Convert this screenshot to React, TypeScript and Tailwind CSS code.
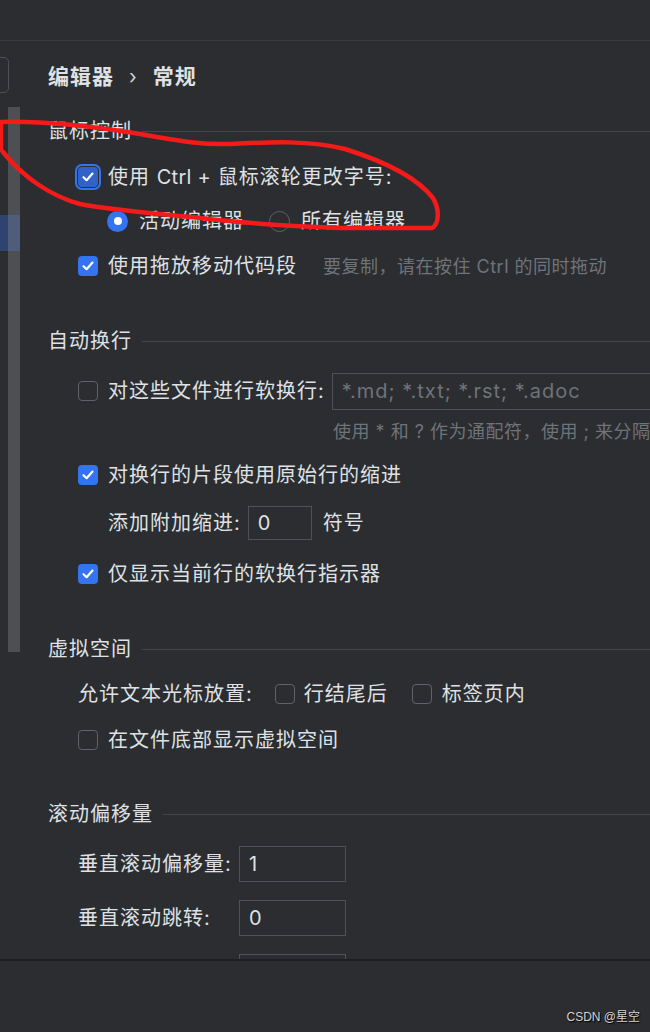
import React from 'react';

const FONT = "font-['Inter','Noto_Sans_CJK_SC',sans-serif]";

const Box = ({ checked = false, focused = false }: { checked?: boolean; focused?: boolean }) => {
    if (!checked) {
        return <div className="w-[20px] h-[20px] shrink-0 rounded-[4px] border border-[#5f6268]" />;
    }
    return (
        <div
            className={`w-[20px] h-[20px] shrink-0 rounded-[4px] flex items-center justify-center ${
                focused ? 'bg-[#3062c8] outline-2 outline-[#3574f0] outline-offset-[1px]' : 'bg-[#3574f0]'
            }`}
        >
            <svg width="14" height="14" viewBox="0 0 14 14" fill="none">
                <path d="M2.5 7.2 L5.6 10.2 L11.5 3.6" stroke="white" strokeWidth="2.2" strokeLinecap="round" strokeLinejoin="round" />
            </svg>
        </div>
    );
};

const Radio = ({ on = false }: { on?: boolean }) =>
    on ? (
        <div className="w-[21px] h-[21px] shrink-0 rounded-full bg-[#3574f0] flex items-center justify-center">
            <div className="w-[8px] h-[8px] rounded-full bg-white" />
        </div>
    ) : (
        <div className="w-[21px] h-[21px] shrink-0 rounded-full border-[1.5px] border-[#5f6268]" />
    );

const Section = ({ title, className = '' }: { title: string; className?: string }) => (
    <div className={`flex items-center h-[30px] ${className}`}>
        <span className="whitespace-nowrap">{title}</span>
        <div className="ml-[10px] flex-1 h-px bg-[#43454a]" />
    </div>
);

const CheckRow = ({ label, checked, focused, className = '', children }: {
    label: React.ReactNode; checked?: boolean; focused?: boolean; className?: string; children?: React.ReactNode;
}) => (
    <div className={`flex items-center h-[44px] ml-[30px] ${className}`}>
        <Box checked={checked} focused={focused} />
        <span className="ml-[10px] whitespace-nowrap">{label}</span>
        {children}
    </div>
);

const Field = ({ value, className = '' }: { value: string; className?: string }) => (
    <div className={`shrink-0 border border-[#4e5157] flex items-center pl-[9px] ${className}`}>
        {value}
    </div>
);

const Sidebar = () => (
    <div className="w-[20px] shrink-0 relative">
        <div className="mt-[16px] -ml-[4px] w-[13px] h-[36px] rounded-[5px] border border-[#4e5157]" />
        <div className="mt-[122px] h-[36px] bg-[#2e436e]" />
        <div className="absolute left-[8px] top-[66px] w-[12px] h-[545px] bg-[#8b8e94]/35" />
    </div>
);

export default function App() {
    return (
        <div className={`w-[650px] h-[1032px] bg-[#2b2d30] flex flex-col relative overflow-hidden text-[#dfe1e5] ${FONT}`}>
            <div className="h-[41px] shrink-0 border-b border-[#393b40]" />

            <div className="flex h-[918px] shrink-0 overflow-hidden">
                <Sidebar />

                <div className="flex-1 min-w-0 pl-[28px] flex flex-col [&>*]:shrink-0 text-[20px] tracking-[1px]">
                    <div className="mt-[14px] h-[44px] flex items-center text-[21px] font-bold">
                        <span>编辑器</span>
                        <span className="mx-[15px] font-normal text-[20px] text-[#cfd1d6]">›</span>
                        <span>常规</span>
                    </div>

                    <Section title="鼠标控制" className="mt-[17px]" />
                    <CheckRow
                        label={<>使用 <span className="tracking-[0.3px]">Ctrl +</span> 鼠标滚轮更改字号:</>}
                        checked
                        focused
                        className="mt-[9px]"
                    />
                    <div className="flex items-center h-[44px] ml-[59px]">
                        <Radio on />
                        <span className="ml-[11px]">活动编辑器</span>
                        <div className="ml-[25px]"><Radio /></div>
                        <span className="ml-[11px]">所有编辑器</span>
                    </div>
                    <div className="flex items-center h-[46px] ml-[30px]">
                        <Box checked />
                        <span className="ml-[10px] whitespace-nowrap">使用拖放移动代码段</span>
                        <span className="ml-[26px] text-[18px] tracking-[0.5px] text-[#6f737a] whitespace-nowrap">要复制，请在按住 Ctrl 的同时拖动</span>
                    </div>

                    <Section title="自动换行" className="mt-[37px]" />
                    <div className="flex items-center h-[38px] ml-[30px] mt-[16px]">
                        <Box />
                        <span className="ml-[10px] whitespace-nowrap">对这些文件进行软换行:</span>
                        <Field value="*.md; *.txt; *.rst; *.adoc" className="ml-[7px] w-[400px] h-[37px] text-[#6f737a]" />
                    </div>
                    <div className="h-[24px] mt-[9px] pl-[285px] flex items-center text-[18px] tracking-[0.5px] text-[#6f737a] whitespace-nowrap">
                        使用 * 和 ? 作为通配符，使用 ; 来分隔
                    </div>
                    <CheckRow label="对换行的片段使用原始行的缩进" checked className="mt-[10px]" />
                    <div className="flex items-center h-[34px] ml-[60px] mt-[9px]">
                        <span className="whitespace-nowrap">添加附加缩进:</span>
                        <Field value="0" className="ml-[7px] w-[64px] h-[34px]" />
                        <span className="ml-[11px]">符号</span>
                    </div>
                    <CheckRow label="仅显示当前行的软换行指示器" checked className="mt-[12px]" />

                    <Section title="虚拟空间" className="mt-[38px]" />
                    <div className="flex items-center h-[44px] ml-[30px] mt-[8px]">
                        <span className="whitespace-nowrap">允许文本光标放置:</span>
                        <div className="ml-[22px]"><Box /></div>
                        <span className="ml-[9px] whitespace-nowrap">行结尾后</span>
                        <div className="ml-[24px]"><Box /></div>
                        <span className="ml-[10px] whitespace-nowrap">标签页内</span>
                    </div>
                    <CheckRow label="在文件底部显示虚拟空间" className="mt-[2px]" />

                    <Section title="滚动偏移量" className="mt-[37px]" />
                    <div className="flex items-center h-[36px] ml-[30px] mt-[17px]">
                        <span className="w-[161px] shrink-0 whitespace-nowrap">垂直滚动偏移量:</span>
                        <Field value="1" className="w-[107px] h-[36px]" />
                    </div>
                    <div className="flex items-center h-[36px] ml-[30px] mt-[18px]">
                        <span className="w-[161px] shrink-0 whitespace-nowrap">垂直滚动跳转:</span>
                        <Field value="0" className="w-[107px] h-[36px]" />
                    </div>
                    <div className="flex items-center h-[36px] ml-[30px] mt-[18px]">
                        <span className="w-[161px] shrink-0" />
                        <Field value="" className="w-[107px] h-[36px]" />
                    </div>
                </div>
            </div>

            <div className="h-[2px] shrink-0 bg-[#1e1f22]" />
            <div className="flex-1" />

            <div className="absolute right-[10px] bottom-[6px] text-[12px] text-[#d4d4d4] font-['Liberation_Sans','Noto_Sans_CJK_SC',sans-serif] [text-shadow:1px_1px_1px_#000]">
                CSDN @星空
            </div>

            {/* hand-drawn annotation on top of the screenshot */}
            <svg className="absolute left-0 top-0 pointer-events-none" width="650" height="1032" viewBox="0 0 650 1032" fill="none">
                <path
                    d="M1 150 L1 122 C40 121 90 126 140 134 C175 140 200 145 230 144 C270 142 310 140 345 149 C380 160 415 175 433 198 C440 210 439 224 432 228 L340 228 C290 226 250 224 200 218 C150 213 110 210 80 204 C50 196 22 176 3 152"
                    stroke="#f51a1a"
                    strokeWidth="4.5"
                    strokeLinecap="round"
                    strokeLinejoin="round"
                />
            </svg>
        </div>
    );
}
